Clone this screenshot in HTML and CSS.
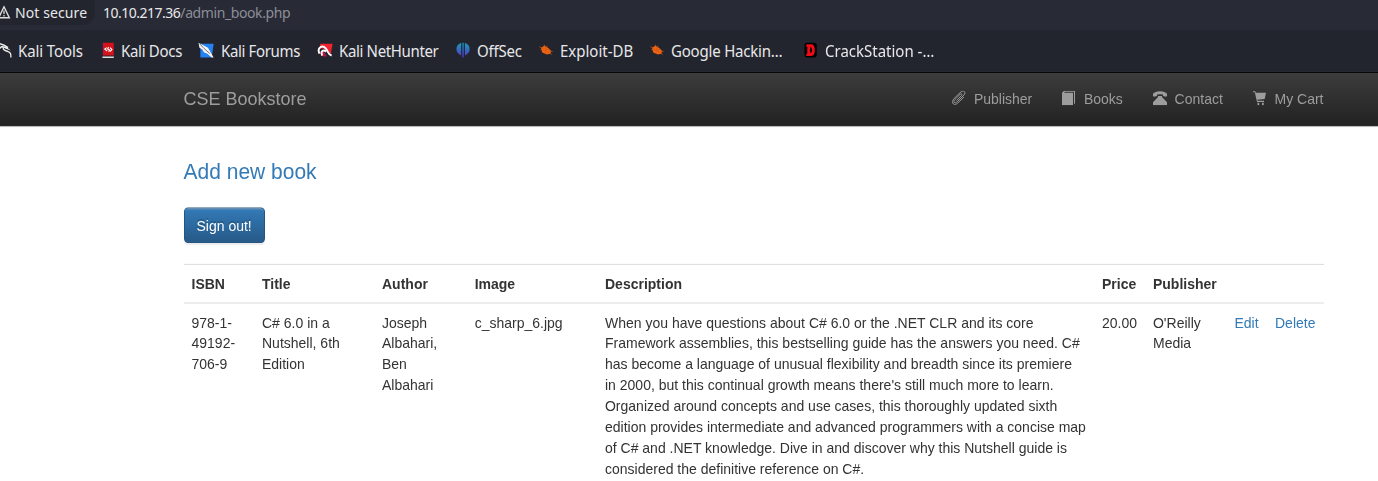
FILE: index.html
```html
<!DOCTYPE html>
<html lang="en">
<head>
<meta charset="utf-8">
<title>CSE Bookstore</title>
<link rel="stylesheet" href="styles.css">
</head>
<body>
<div class="screen">
  <header class="browser">
    <div class="address">
      <div class="security">
        <svg class="warn" viewBox="0 0 14 14"><path d="M4 1.500 9.300 12H-1.300Z" fill="none" stroke="#ddd" stroke-width="1.400"/><path d="M4 5v3.500M4 9.500v1.300" stroke="#ddd" stroke-width="1.300"/></svg>
        <span>Not secure</span>
      </div>
      <div class="url">10.10.217.36<span class="path">/admin_book.php</span></div>
    </div>
    <nav class="bookmarks">
      <a class="bm w1"><svg viewBox="0 0 18 18"><path d="M-1 2C3 3 5 4 8 6M-1 7C1 4 3 5 3 7S5 9 8 10 11 13 11 16" fill="none" stroke="#eee" stroke-width="1.400"/><path d="M0 4 6 5 11 9 5 7Z" fill="#eee"/></svg><span>Kali Tools</span></a>
      <a class="bm w2"><svg viewBox="0 0 18 18"><path d="M1 1h12v13H1z" fill="#d5121a"/><path d="M0 1h1.500v13H0z" fill="#26264f"/><path d="M1 15h12v1.500H1z" fill="#ddd"/><path d="M5.500 6 3.500 7.500 6 9.500M7.500 5.500 6.500 7.500 8.500 8.500 7.500 10M9 6l2 2-2 2" fill="none" stroke="#fff" stroke-width="1.200"/></svg><span>Kali Docs</span></a>
      <a class="bm w3"><svg viewBox="0 0 18 18"><path d="M2 2h14l-2 14H2z" fill="#2482f2"/><path d="M0 1 5 3.500 10 6 13 11 16 16 14 16 9 12 6 11 4 8 1 6Z" fill="#f4f4f4"/><path d="m1 2 5 5 6 5" fill="none" stroke="#333" stroke-width=".7"/></svg><span>Kali Forums</span></a>
      <a class="bm w4"><svg viewBox="0 0 18 18"><path d="M3 2h13l-2 11-8-6H2Z" fill="#ee2530"/><path d="m1 11 5 4h4L6 9Z" fill="#b51545"/><path d="M2 12C-1 5 6 3 9 7S11 13 15 14M5 14C3 9 6 8 9 10" fill="none" stroke="#fff" stroke-width="2"/></svg><span>Kali NetHunter</span></a>
      <a class="bm w5"><svg viewBox="0 0 18 18"><defs><linearGradient id="og" x1="0" y1="0" x2="0" y2="1"><stop offset="0" stop-color="#15a0bd"/><stop offset="1" stop-color="#5633c8"/></linearGradient></defs><path d="M6 1v13Q1 12 1 7.500T6 1ZM10 1v13Q15 12 15 7.500T10 1ZM7.300 1h1.400v15H7.300z" fill="url(#og)"/></svg><span>OffSec</span></a>
      <a class="bm w6"><svg viewBox="0 0 18 18"><path d="M3 6 6 4l4 2 3 3v3l-4 1-5-2-1-3Z" fill="#ef6410"/><path d="M1 5 14 13M2 8 12 8M6 3l4 9M9 4 7 12M11 9l4 1" stroke="#d85b16" stroke-width=".7"/></svg><span>Exploit-DB</span></a>
      <a class="bm w7"><svg viewBox="0 0 18 18"><path d="M3 6 6 4l4 2 3 3v3l-4 1-5-2-1-3Z" fill="#ef6410"/><path d="M1 5 14 13M2 8 12 8M6 3l4 9M9 4 7 12M11 9l4 1" stroke="#d85b16" stroke-width=".7"/></svg><span>Google Hackin…</span></a>
      <a class="bm w8"><svg viewBox="0 0 18 18"><rect x="1" y="1" width="13" height="15" rx="3" fill="#000"/><path d="M3 2.500h5q4 0 4 6t-4 6H3v-2.500h1V5H3ZM7 5.500v6q2 0 2-3T7 5.500Z" fill="#f00b16" fill-rule="evenodd"/></svg><span>CrackStation -…</span></a>
    </nav>
  </header>

  <nav class="navbar">
    <a class="brand">CSE Bookstore</a>
    <div class="links">
      <a class="n1"><svg viewBox="0 0 14 14"><path d="M4.500 9.500 9.500 4.500c1-1.200 0-2.200-1.200-1.200L2.800 8.500c-2 2.200.2 4.300 2.300 2.200l7-6.700c2.500-2.600-.8-5-3-3L2 7.500C-1.500 11.500 2 15 5.500 12l6.500-6" fill="none" stroke="currentColor" stroke-width=".95"/></svg>Publisher</a>
      <a class="n2"><svg viewBox="0 0 14 14"><path d="M0 2 2 0h11v12l-1 1V1H3L2 2h9v12H0Z" fill="currentColor"/></svg>Books</a>
      <a class="n3"><svg viewBox="0 0 14 14"><path d="M0 5V3q2-2.500 7-2.500T14 3v2l-1 .8-3-.8V3.500Q7 3 4 3.500V5l-3 .8ZM5 5h4v1l5 5v3H0v-3l5-5Z" fill="currentColor"/></svg>Contact</a>
      <a class="n4"><svg viewBox="0 0 14 14"><path d="M0 .5h2.300L2.800 2H13l-1.300 6L4.300 8.700l.2 1H11v1H4L1.800 1.500H0ZM4.500 11.500h1.700V14H4.500zM9 11.500h1.700V14H9z" fill="currentColor"/></svg>My Cart</a>
    </div>
  </nav>

  <main class="container">
    <p class="lead"><a>Add new book</a></p>
    <a class="btn">Sign out!</a>
    <table>
      <colgroup><col class="c1"><col class="c2"><col class="c3"><col class="c4"><col class="c5"><col class="c6"><col class="c7"><col class="c8"><col class="c9"></colgroup>
      <tr><th>ISBN</th><th>Title</th><th>Author</th><th>Image</th><th>Description</th><th>Price</th><th>Publisher</th><th></th><th></th></tr>
      <tr>
        <td>978-1-49192-706-9</td>
        <td>C# 6.0 in a Nutshell, 6th Edition</td>
        <td>Joseph Albahari, Ben Albahari</td>
        <td>c_sharp_6.jpg</td>
        <td>When you have questions about C# 6.0 or the .NET CLR and its core Framework assemblies, this bestselling guide has the answers you need. C# has become a language of unusual flexibility and breadth since its premiere in 2000, but this continual growth means there's still much more to learn. Organized around concepts and use cases, this thoroughly updated sixth edition provides intermediate and advanced programmers with a concise map of C# and .NET knowledge. Dive in and discover why this Nutshell guide is considered the definitive reference on C#.</td>
        <td>20.00</td>
        <td>O'Reilly Media</td>
        <td><a>Edit</a></td>
        <td><a>Delete</a></td>
      </tr>
    </table>
  </main>
</div>
</body>
</html>
```
FILE: styles.css
```css
* { box-sizing: border-box; }
html, body { margin: 0; height: 481px; overflow: hidden; background: #fff; }
.screen { transform: scaleY(1.043); transform-origin: 0 0; width: 1378px; height: 461px; overflow: hidden; font: 14px/20px "Liberation Sans", Arial, sans-serif; color: #333; }
.browser { height: 69px; background: #23252e; font-family: "Noto Sans", sans-serif; font-size: 14px; color: #e8e8ea; white-space: nowrap; }
.address { height: 28.5px; display: flex; background: #282a35; }
.security { width: 95px; height: 24px; background: #23252e; border-radius: 0 0 12px 0; display: flex; gap: 1px; padding-top: 2px; letter-spacing: .1px; }
.warn { width: 14px; height: 14px; margin-top: 3px; }
.url { padding: 2px 0 0 8px; letter-spacing: -.5px; }
.path { color: #8c8e98; letter-spacing: -.4px; }
.bookmarks { display: flex; height: 40px; align-items: center; font-size: 15px; }
.bm { display: flex; align-items: center; flex: none; }
.bm svg { width: 18px; height: 17px; flex: none; }
.w1 { width: 101px; letter-spacing: -.1px; }
.w2 { width: 97px; gap: 2px; letter-spacing: -.3px; }
.w3 { width: 119px; gap: 5px; letter-spacing: -.35px; }
.w4 { width: 138px; gap: 4px; letter-spacing: -.35px; }
.w5 { width: 83px; gap: 4px; letter-spacing: -.2px; }
.w6 { width: 111px; gap: 4px; }
.w7 { width: 154px; gap: 4px; letter-spacing: -.2px; }
.w8 { gap: 4px; }
.navbar { height: 52px; display: flex; justify-content: space-between; padding: 0 54.5px 0 183.5px; border-top: 1px solid #080808; border-bottom: 1px solid #080808; background: linear-gradient(#3c3c3c, #222); color: #9d9d9d; box-shadow: 0 1px 1px rgba(0,0,0,.12); }
.brand { font-size: 18px; padding-top: 15px; }
.links { display: flex; gap: 29.7px; padding-top: 15px; }
.links a { display: flex; gap: 8px; }
.links svg { width: 14px; height: 14px; margin-top: 1.5px; }
.container { width: 1140px; margin-left: 183.5px; padding-top: 29px; }
a { color: inherit; }
.container a { color: #337ab7; }
.lead { font-size: 21px; line-height: 29.4px; margin: 0 0 20px; }
.container .btn { display: inline-block; height: 34px; padding: 6px 12px; border: 1px solid #245580; border-radius: 4px; background: linear-gradient(#337ab7, #265a88); color: #fff; text-shadow: 0 -1px 0 rgba(0,0,0,.2); box-shadow: inset 0 1px 0 rgba(255,255,255,.15), 0 1px 1px rgba(0,0,0,.075); vertical-align: top; }
table { width: 1140px; margin-top: 20px; table-layout: fixed; border-collapse: collapse; }
th, td { text-align: left; vertical-align: top; padding: 8px; border-top: 1px solid #ddd; }
.c1 { width: 70.5px; } .c2 { width: 120px; } .c3 { width: 92.7px; } .c4 { width: 130.3px; } .c5 { width: 497px; }
.c6 { width: 51px; } .c7 { width: 81.5px; } .c8 { width: 40.5px; } .c9 { width: 56.5px; }
```
